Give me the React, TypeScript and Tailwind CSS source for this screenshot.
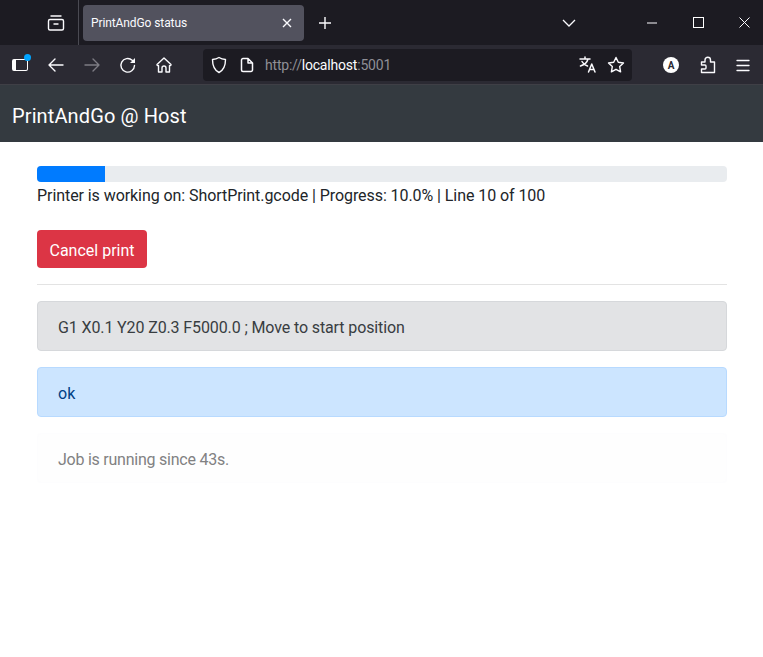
import React from "react";

function Icon({ children, size = 20, sw = 1.4 }: { children: React.ReactNode; size?: number; sw?: number }) {
  return (
    <svg width={size} height={size} viewBox="0 0 20 20" fill="none" stroke="currentColor" strokeWidth={sw} strokeLinecap="round" strokeLinejoin="round">
      {children}
    </svg>
  );
}

export default function App() {
  return (
    <div className="min-h-[657px] bg-white text-[16px] text-[#212529] font-['Roboto',sans-serif]">
      <div className="h-[45px] bg-[#1c1b22] flex items-center text-[#fbfbfe]">
        <div className="w-[79px] h-[45px] flex items-center justify-end pr-[12px] border-r border-[#4a4a52]">
          <Icon>
            <rect x="2.500" y="6.500" width="15" height="10.500" rx="1.500" />
            <path d="M5 3h10M8 11h4" />
          </Icon>
        </div>
        <div className="ml-[4px] w-[221px] h-[36px] rounded-[4px] bg-[#52525e] flex items-center justify-between pl-[8px] pr-[12px] text-[12px]">
          <span className="pt-[1px] tracking-[-0.1px]">PrintAndGo status</span>
          <svg width="10" height="10" viewBox="0 0 10 10" stroke="currentColor" strokeWidth="1.400"><path d="M1 1l8 8M9 1l-8 8" /></svg>
        </div>
        <svg className="ml-[15px]" width="12" height="12" viewBox="0 0 12 12" stroke="currentColor" strokeWidth="1.400"><path d="M6 0v12M0 6h12" /></svg>
        <svg className="ml-[231px]" width="14" height="8" viewBox="0 0 14 8" fill="none" stroke="currentColor" strokeWidth="1.300"><path d="M1 1l6 6 6-6" /></svg>
        <svg className="ml-[71px]" width="10" height="2" viewBox="0 0 10 2" stroke="currentColor"><path d="M0 1h10" /></svg>
        <div className="ml-[36px] w-[11px] h-[11px] border border-white" />
        <svg className="ml-[35px]" width="11" height="11" viewBox="0 0 11 11" stroke="currentColor"><path d="M0.500 0.500l10 10M10.500 0.500l-10 10" /></svg>
      </div>
      <div className="h-[40px] pt-[1px] bg-[#2b2a33] flex items-center text-[#fbfbfe] border-b border-[#3f3f46]">
        <div className="relative ml-[12px] w-[16px] h-[12px]">
          <div className="w-[16px] h-[12px] rounded-[2px] border-[1.5px] border-white border-l-[4px]" />
          <div className="absolute -top-[5px] -right-[3px] w-[7px] h-[7px] rounded-full bg-[#00a4ff]" />
        </div>
        <div className="ml-[18px]"><Icon><path d="M17 10H3M9 4l-6 6 6 6" /></Icon></div>
        <div className="ml-[16px] text-[#7d7c84]"><Icon><path d="M3 10h14M11 4l6 6-6 6" /></Icon></div>
        <div className="ml-[16px]">
          <Icon>
            <path d="M16.500 10.500a6.800 6.800 0 1 1-2.300-5.300L16 7" />
            <path d="M17 3v5h-5z" fill="currentColor" stroke="none" />
          </Icon>
        </div>
        <div className="ml-[16px]"><Icon><path d="M3 9.500L10 3l7 6.500a1 1 0 0 1-1.500 1V17h-3.500v-4a2 2 0 0 0-4 0v4H4.500v-6.500A1 1 0 0 1 3 9.500z" /></Icon></div>
        <div className="ml-[29px] w-[429px] h-[32px] rounded-[4px] bg-[#1c1b22] flex items-center pl-[6px] pr-[6px]">
          <Icon><path d="M10 2.500c2 1.200 4 1.800 6.500 2 0 6-1.500 10.500-6.500 13-5-2.500-6.500-7-6.500-13 2.500-.2 4.500-.8 6.500-2z" /></Icon>
          <div className="ml-[11px] flex"><svg width="14" height="16" viewBox="0 0 14 16" fill="none" stroke="currentColor" strokeWidth="1.500" strokeLinejoin="round"><path d="M1.500 3a1.500 1.500 0 0 1 1.500-1.500h5l4.500 4.500v7a1.500 1.500 0 0 1-1.500 1.500H3a1.500 1.500 0 0 1-1.500-1.500zM8 1.500V6h4.500" /></svg></div>
          <span className="ml-[11px] text-[14px] tracking-[-0.2px] text-[#8f8f96]">http://<span className="text-[#fbfbfe]">localhost</span>:5001</span>
          <div className="ml-auto flex items-center gap-[8px]">
            <Icon sw={1.500}><path d="M2 4h10M7 2v2M10 4c-.8 3.300-3.500 5.700-7.500 7M4 6.500c1 2 3 3.700 5.500 4.500M10.500 17l3.250-8 3.250 8M11.500 14.500h4.500" /></Icon>
            <Icon><path d="M10 2.500l2.300 4.800 5.200.7-3.800 3.600.9 5.200-4.600-2.500-4.600 2.500.9-5.200L2.500 8l5.200-.7z" /></Icon>
          </div>
        </div>
        <div className="ml-[31px] w-[16px] h-[16px] rounded-full bg-white text-[#2b2a33] text-[10px] font-bold flex items-center justify-center">A</div>
        <div className="ml-[19px]"><Icon><path d="M3.500 7H7V5a2.500 2.500 0 0 1 5.500 0v2h4v10.500h-13V14H7a1 1 0 0 0 1-1v-2a1 1 0 0 0-1-1H3.500z" /></Icon></div>
        <div className="ml-[15px]"><Icon sw={1.300}><path d="M4 5.500h12M4 10.500h12M4 15.500h12" /></Icon></div>
      </div>
      <div className="h-[57px] bg-[#343a40] flex items-center px-[12px] pt-[5px]">
        <span className="text-[20px] tracking-[0.12px] text-white">PrintAndGo @ Host</span>
      </div>
      <div className="pl-[37px] pr-[36px] w-[763px] pt-[24px]">
        <div className="h-[16px] rounded-[4px] bg-[#e9ecef] overflow-hidden">
          <div className="h-full w-[68px] bg-[#007bff]" />
        </div>
        <div className="leading-[24px] mt-[2px] tracking-[-0.07px]">Printer is working on: ShortPrint.gcode | Progress: 10.0% | Line 10 of 100</div>
        <button className="mt-[22px] h-[38px] w-[110px] rounded-[4px] bg-[#dc3545] text-white pt-[3px]">Cancel print</button>
        <div className="mt-[16px] border-t border-[#e3e3e3]" />
        <div className="mt-[16px] h-[50px] rounded-[4px] border border-[#d6d8db] bg-[#e2e3e5] text-[#383d41] px-[20px] pt-[4px] flex items-center tracking-[-0.12px]">G1 X0.1 Y20 Z0.3 F5000.0 ; Move to start position</div>
        <div className="mt-[16px] h-[50px] rounded-[4px] border border-[#b8daff] bg-[#cce5ff] text-[#004085] px-[20px] pt-[4px] flex items-center">ok</div>
        <div className="mt-[16px] h-[50px] rounded-[4px] border border-[#fdfdfe] bg-[#fefefe] text-[#818182] px-[20px] pt-[4px] flex items-center tracking-[-0.24px]">Job is running since 43s.</div>
      </div>
    </div>
  );
}
